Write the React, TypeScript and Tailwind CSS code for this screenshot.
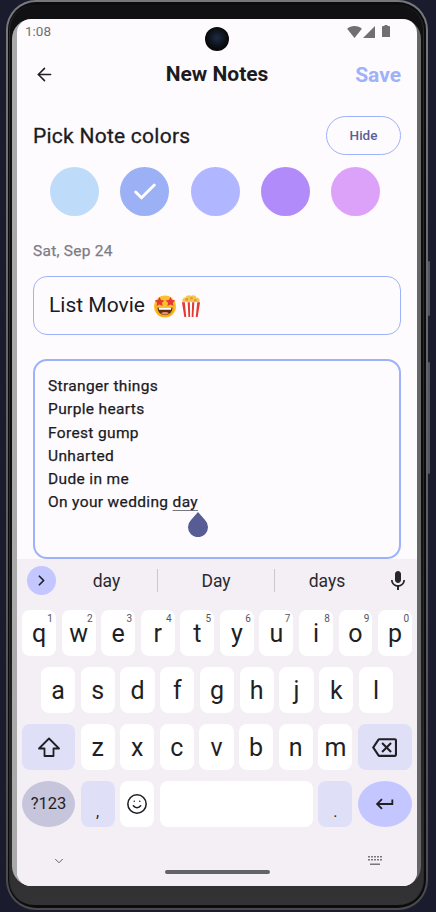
import { ArrowLeft, Check, ChevronDown, ChevronRight, Smile } from 'lucide-react';

const rowOne = [
  ['q', '1'],
  ['w', '2'],
  ['e', '3'],
  ['r', '4'],
  ['t', '5'],
  ['y', '6'],
  ['u', '7'],
  ['i', '8'],
  ['o', '9'],
  ['p', '0'],
];
const rowTwo = ['a', 's', 'd', 'f', 'g', 'h', 'j', 'k', 'l'];
const rowThree = ['z', 'x', 'c', 'v', 'b', 'n', 'm'];
const swatches = ['bg-[#bedcfa]', 'bg-[#9cb0f6]', 'bg-[#b0b6ff]', 'bg-[#b18bfa]', 'bg-[#dca1f8]'];
const movies = ['Stranger things', 'Purple hearts', 'Forest gump', 'Unharted', 'Dude in me'];

function Key({ label, hint }: { label: string; hint?: string }) {
  return (
    <div className="relative flex-1 h-[46px] bg-white rounded-[8px] flex items-center justify-center text-[25px] text-[#1f1f24] pt-[1px]">
      {label}
      {hint && <span className="absolute top-[2px] right-[3px] text-[10px] leading-[14px] text-[#55555c]">{hint}</span>}
    </div>
  );
}

function StarStruck() {
  return (
    <svg width="24" height="24" viewBox="0 0 24 24">
      <circle cx="12" cy="12.5" r="11" fill="#fbc02d" />
      <path d="M2.6 10c2.4 10 16.4 10 18.8 0 1.4 8.5-3.4 13-9.4 13S1.2 18.500 2.600 10z" fill="#f59e0b" opacity=".55" />
      <path d="M6.500 3l1.600 3 3.300.4-2.400 2.300.6 3.300-3.100-1.600-3 1.600.6-3.300L1.700 6.400 5 6z" fill="#e53935" />
      <path d="M17.500 3l1.500 3 3.300.4-2.400 2.300.6 3.300-3-1.600-3.100 1.600.6-3.300-2.400-2.300 3.300-.4z" fill="#e53935" />
      <path d="M4.500 13.500h15c0 4.500-3.200 7.500-7.500 7.500s-7.500-3-7.500-7.500z" fill="#5d2e12" />
      <path d="M5.500 13.500h13l-.6 2.200H6.100z" fill="#fff" />
      <path d="M8 19c2-1.500 6-1.500 8 0-2 2-6 2-8 0z" fill="#ef8f6a" />
    </svg>
  );
}

function Popcorn() {
  return (
    <svg width="20" height="24" viewBox="0 0 21 24">
      <path d="M2 8C0 5 3 3 5 3c0-2 4-3 5.500-1.500C12 0 16 1 16 3c2 0 5 2 3 5z" fill="#f6c453" />
      <circle cx="6" cy="5" r="1.500" fill="#e09a2b" />
      <circle cx="11" cy="3.800" r="1.300" fill="#e09a2b" />
      <circle cx="15" cy="6" r="1.400" fill="#e09a2b" />
      <path d="M1 8h19l-2.500 15.500h-14z" fill="#fff" />
      <path d="M1 8h3l1.500 15.500H3.500zM7 8h2.300l.300 15.500H7.800zM11.700 8H14l-1 15.500h-1.800zM17 8h3l-2.500 15.500h-2z" fill="#e53935" />
    </svg>
  );
}

export default function App() {
  return (
    <div className="relative w-[436px] h-[912px] overflow-hidden bg-[#1a1c2e] font-['Roboto',sans-serif] px-[6px] pb-[2px]">
      <div className="absolute left-[428px] top-[261px] w-[2px] h-[55px] bg-[#55565f] rounded-full" />
      <div className="absolute left-[428px] top-[362px] w-[2px] h-[112px] bg-[#55565f] rounded-full" />

      <div className="h-full w-[422px] rounded-[30px] bg-gradient-to-b from-[#77787a] to-[#4a4a4c] p-[2px]">
        <div className="h-full rounded-[28px] bg-[#0c0c0e] pt-[3px] pb-[3px] pl-[1px] pr-[2px]">
          <div className="h-full rounded-[25px] bg-gradient-to-b from-[#111113] via-[#0c0c0e] to-[#333335] border-x border-x-[#2a2a2c] pl-[2px] pr-[1px] pt-[14px] pb-[19px]">
            <div className="relative h-full w-[409px] rounded-t-[20px] rounded-b-[20px] bg-gradient-to-r from-[#aaaaaa] to-[#666666] pl-[5px] pr-[4px]">
              <div className="relative h-full flex flex-col bg-[#fefbff] rounded-t-[14px] rounded-b-[14px] overflow-hidden">
                <div className="absolute left-[188px] top-[8px] w-[24px] h-[24px] rounded-full bg-[radial-gradient(circle_at_50%_45%,#1c2c44,#0a0a0c_60%)]" />

                <div className="flex items-center justify-between pl-[8px] pr-[27px] h-[25px] text-[13.500px] text-[#6f6f74]">
                  <span>1:08</span>
                  <div className="flex items-center gap-[1px]">
                    <svg width="15" height="12" viewBox="0 0 16 13">
                      <path d="M0 3C4-1 12-1 16 3L8 13z" fill="#6f6f74" />
                    </svg>
                    <svg width="12" height="12" viewBox="0 0 13 13">
                      <path d="M13 0V13H0z" fill="#6f6f74" />
                    </svg>
                    <svg width="8" height="12" viewBox="0 0 8 12" className="ml-[6px] mb-[1px]">
                      <path d="M2.500 0h3v1h1.500a1 1 0 0 1 1 1V12H0V2a1 1 0 0 1 1-1h1.500z" fill="#6f6f74" />
                    </svg>
                  </div>
                </div>

                <div className="flex items-center mt-[17px] pl-[16px] pr-[16px] h-[26px]">
                  <div className="flex-1">
                    <ArrowLeft size={21} strokeWidth={1.8} className="text-[#1f1f24] ml-[1px]" />
                  </div>
                  <span className="text-[21px] font-bold text-[#1c1b1f] pt-[1px]">New Notes</span>
                  <span className="flex-1 text-right text-[21px] font-bold text-[#9db2f8] pt-[3px]">Save</span>
                </div>

                <div className="flex items-center justify-between mt-[29px] pl-[16px] pr-[16px]">
                  <span className="text-[21px] font-normal tracking-[0.25px] [-webkit-text-stroke:0.3px_#1c1b1f] text-[#1c1b1f] pt-[3px]">Pick Note colors</span>
                  <button className="w-[75px] h-[39px] rounded-full border border-[#9db2f8] text-[13.500px] font-medium text-[#5a5f96]">
                    Hide
                  </button>
                </div>

                <div className="flex justify-between pl-[33px] pr-[37px] mt-[12px]">
                  {swatches.map((color, i) => (
                    <div key={color} className={`w-[49px] h-[49px] rounded-full flex items-center justify-center ${color}`}>
                      {i === 1 && <Check size={28} strokeWidth={2.5} className="text-white" />}
                    </div>
                  ))}
                </div>

                <div className="mt-[25px] pl-[16px] text-[15.500px] leading-[20px] font-normal tracking-[0.25px] [-webkit-text-stroke:0.25px_#7d7d85] text-[#7d7d85]">Sat, Sep 24</div>

                <div className="mx-[16px] mt-[15px] h-[59px] rounded-[14px] border border-[#9db2f8] pl-[15px] flex items-center gap-[8px] text-[21px] text-[#1c1b1f]">
                  <span className="pt-[1px]">List Movie</span>
                  <div className="flex items-center gap-[4px]">
                    <StarStruck />
                    <Popcorn />
                  </div>
                </div>

                <div className="flex-1 mx-[16px] mt-[24px] rounded-[14px] border-2 border-[#9db2f8] pl-[13px] pt-[14px] relative text-[15.500px] leading-[23.300px] font-normal tracking-[0.35px] [-webkit-text-stroke:0.25px_#1c1b1f] text-[#1c1b1f]">
                  {movies.map((line) => (
                    <div key={line}>{line}</div>
                  ))}
                  <div>
                    On your wedding <span className="underline decoration-[#77777d] underline-offset-[3px]">day</span>
                  </div>
                  <svg width="20" height="25" viewBox="0 0 20 25" className="absolute left-[153px] top-[151px]">
                    <path d="M10 0L17 8A10 10 0 1 1 3 8z" fill="#585c94" />
                  </svg>
                </div>

                <div className="h-[327px] bg-[#f3eff5] flex flex-col px-[5px]">
                  <div className="flex items-center h-[29px] mt-[7px] pl-[5px] text-[17.500px] text-[#2a2a30]">
                    <div className="w-[29px] h-[29px] rounded-full bg-[#c3c6ff] flex items-center justify-center">
                      <ChevronRight size={17} strokeWidth={2.4} className="text-[#1f1f24]" />
                    </div>
                    <span className="w-[101px] text-center pt-[2px]">day</span>
                    <div className="w-px h-[23px] bg-[#c9c6cc]" />
                    <span className="w-[116px] text-center pt-[2px]">Day</span>
                    <div className="w-px h-[23px] bg-[#c9c6cc]" />
                    <span className="w-[104px] text-center pt-[2px]">days</span>
                    <svg width="24" height="24" viewBox="0 0 24 24" className="ml-[7px]">
                      <path
                        d="M12 14c1.660 0 2.990-1.340 2.990-3L15 5c0-1.660-1.340-3-3-3S9 3.340 9 5v6c0 1.660 1.340 3 3 3zm5.300-3c0 3-2.540 5.100-5.300 5.100S6.700 14 6.700 11H5c0 3.410 2.720 6.230 6 6.720V21h2v-3.280c3.280-.48 6-3.300 6-6.720h-1.700z"
                        fill="#26262b"
                      />
                    </svg>
                  </div>

                  <div className="flex flex-col gap-[11px] mt-[15px]">
                    <div className="flex gap-[5.600px]">
                      {rowOne.map(([label, hint]) => (
                        <Key key={label} label={label} hint={hint} />
                      ))}
                    </div>
                    <div className="flex gap-[5.600px] px-[19px]">
                      {rowTwo.map((label) => (
                        <Key key={label} label={label} />
                      ))}
                    </div>
                    <div className="flex gap-[5.600px]">
                      <div className="w-[53px] h-[46px] rounded-[8px] bg-[#dfdff7] flex items-center justify-center">
                        <svg width="24" height="24" viewBox="0 0 24 24">
                          <path d="M12 3.500L22 13.500H16.500V21H7.500V13.500H2z" fill="none" stroke="#1f1f24" strokeWidth="1.800" strokeLinejoin="round" />
                        </svg>
                      </div>
                      {rowThree.map((label) => (
                        <Key key={label} label={label} />
                      ))}
                      <div className="w-[54px] h-[46px] rounded-[8px] bg-[#dfdff7] flex items-center justify-center">
                        <svg width="25" height="25" viewBox="0 0 24 24">
                          <path
                            d="M22 3H7c-.69 0-1.230.35-1.590.88L0 12l5.410 8.110c.36.53.9.89 1.590.89h15c1.100 0 2-.9 2-2V5c0-1.100-.9-2-2-2zm0 16H7.070L2.400 12l4.660-7H22v14zm-11.590-2L14 13.410 17.590 17 19 15.590 15.410 12 19 8.410 17.590 7 14 10.590 10.410 7 9 8.410 12.590 12 9 15.590z"
                            fill="#1f1f24"
                          />
                        </svg>
                      </div>
                    </div>
                    <div className="flex gap-[5.600px]">
                      <div className="w-[53px] h-[46px] rounded-[50%] bg-[#c6c5dc] flex items-center justify-center text-[16.500px] text-[#1f1f24]">
                        ?123
                      </div>
                      <div className="w-[34px] h-[46px] rounded-[8px] bg-[#dfdff7] flex items-end justify-center pb-[5px] text-[16px] leading-[20px] text-[#1f1f24]">
                        ,
                      </div>
                      <div className="w-[34px] h-[46px] rounded-[8px] bg-white flex items-center justify-center">
                        <Smile size={22} strokeWidth={1.7} className="text-[#1f1f24]" />
                      </div>
                      <div className="flex-1 h-[46px] rounded-[8px] bg-white" />
                      <div className="w-[34px] h-[46px] rounded-[8px] bg-[#dfdff7] flex items-end justify-center pb-[5px] text-[16px] leading-[20px] text-[#1f1f24]">
                        .
                      </div>
                      <div className="w-[54px] h-[46px] rounded-[50%] bg-[#c3c6ff] flex items-center justify-center">
                        <svg width="22" height="22" viewBox="0 0 24 24">
                          <path d="M19 7v4H5.830l3.580-3.590L8 6l-6 6 6 6 1.410-1.410L5.830 13H21V7z" fill="#1f1f24" />
                        </svg>
                      </div>
                    </div>
                  </div>

                  <div className="relative flex-1">
                    <ChevronDown size={14} strokeWidth={1.6} className="absolute left-[30px] top-[27px] text-[#55555c]" />
                    <svg width="16" height="11" viewBox="0 0 16 11" className="absolute left-[346px] top-[29px]">
                      <path
                        d="M0 0h2v1.500H0zM3 0h2v1.500H3zM6 0h2v1.500H6zM9 0h2v1.500H9zM12 0h2v1.500h-2zM0 3h2v1.500H0zM3 3h2v1.500H3zM6 3h2v1.500H6zM9 3h2v1.500H9zM12 3h2v1.500h-2zM2 7.500h10V9H2z"
                        fill="#77777d"
                      />
                    </svg>
                    <div className="absolute left-[143px] top-[43px] w-[105px] h-[4px] rounded-full bg-[#636368]" />
                  </div>
                </div>
              </div>
            </div>
          </div>
        </div>
      </div>
    </div>
  );
}
